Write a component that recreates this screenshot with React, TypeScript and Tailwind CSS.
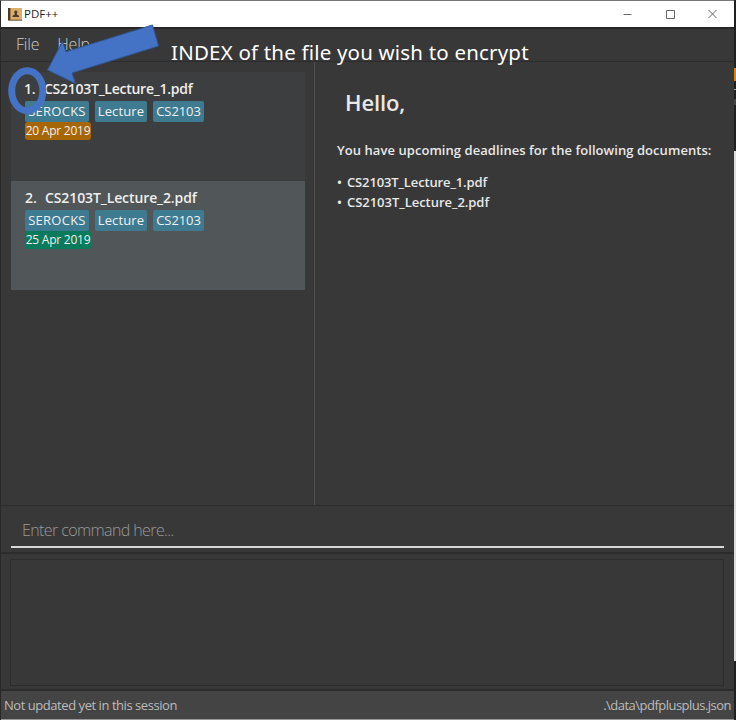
type Doc = { n: string; name: string; date: string; titleSpacing: string; card: string; dateBg: string };

const docs: Doc[] = [
  { n: "1.", name: "CS2103T_Lecture_1.pdf", date: "20 Apr 2019", titleSpacing: "tracking-[-0.26px]", card: "bg-[#3c3e3f]", dateBg: "bg-[#a86707]" },
  { n: "2.", name: "CS2103T_Lecture_2.pdf", date: "25 Apr 2019", titleSpacing: "tracking-[-0.1px] pl-px", card: "bg-[#515658]", dateBg: "bg-[#077b5b]" },
];

const tags = [
  { label: "SEROCKS", size: "w-16 tracking-[0.25px]" },
  { label: "Lecture", size: "w-[52px] tracking-[0.15px]" },
  { label: "CS2103", size: "w-[51px] tracking-[-0.1px]" },
];

function AddressBookIcon() {
  return (
    <svg width="14" height="13" viewBox="0 0 14 13">
      <rect width="14" height="12" rx="0.5" fill="#d9ae6c" />
      <rect width="2" height="12" fill="#4a392e" />
      <path d="M2.5 0v12" stroke="#a7814c" />
      <circle cx="7.8" cy="4" r="1.6" fill="#4b3928" />
      <path d="M4.6 9V7.8l2.2-1.2V5h2v1.6L11 7.8V9z" fill="#4b3928" />
      <path d="M0 12.2h14" stroke="#67492e" />
    </svg>
  );
}

function DocumentCard({ doc }: { doc: Doc }) {
  return (
    <article className={`h-[109px] pt-[7px] pl-[13px] ${doc.card}`}>
      <div className={`flex h-5 items-center text-[14px] font-semibold leading-5 text-[#eee] ${doc.titleSpacing}`}>
        <span className="w-5">{doc.n}</span>
        <span>{doc.name}</span>
      </div>
      <div className="mt-[2px] flex gap-[6px] pl-px">
        {tags.map((tag) => (
          <span key={tag.label} className={`flex h-[21px] items-center justify-center rounded-[2px] bg-[#3e7b91] text-[13px] font-medium text-[#f0f0f0] ${tag.size}`}>
            {tag.label}
          </span>
        ))}
      </div>
      <div className={`ml-px flex h-[18px] w-[66px] items-center justify-center rounded-[3px] text-[12px] tracking-[-0.25px] text-[#eee] ${doc.dateBg}`}>{doc.date}</div>
    </article>
  );
}

export default function App() {
  return (
    <div className="relative flex h-[720px] w-[736px] overflow-hidden bg-[#383838] font-['Open_Sans','Noto_Sans',sans-serif] whitespace-nowrap">
      <div className="flex w-[734px] flex-col border-t border-l border-t-[#777] border-l-[#292929]">
        <header className="flex h-[26px] shrink-0 items-center bg-white pl-[7px] text-[11.5px] text-[#222]">
          <AddressBookIcon />
          <span className="ml-[2px]">PDF++</span>
          <svg className="ml-auto" width="112" height="26" viewBox="0 0 112 26" fill="none" stroke="#666" strokeWidth="1">
            <path d="M1.5 13.5h8M44.5 9.5h8v8h-8zM86.5 9l8 8M94.5 9l-8 8" />
          </svg>
        </header>
        <nav className="flex h-[35px] shrink-0 gap-[18px] border-t-2 border-b border-t-[#272727] border-b-[#2c2c2c] pt-[2px] pl-[15px] text-[16px] font-light leading-[26px] tracking-[-0.2px] text-[#ccc]">
          <span>File</span>
          <span>Help</span>
        </nav>
        <main className="flex h-[443px] shrink-0">
          <section className="w-[314px] border-r border-[#505050] pt-[10px] pr-[9px] pl-[10px]">
            {docs.map((doc) => <DocumentCard key={doc.n} doc={doc} />)}
          </section>
          <section className="pt-[24px] pl-[22px] text-[#e8e8e8]">
            <h1 className="pl-[8px] text-[22px] font-semibold leading-8 tracking-[-0.15px]">Hello,</h1>
            <p className="mt-[22px] text-[13px] font-semibold leading-5 tracking-[0.06px]">You have upcoming deadlines for the following documents:</p>
            <div className="mt-[13px] text-[13px] font-semibold leading-[19.5px] tracking-[-0.14px]">
              {docs.map((doc) => <div key={doc.n} className="flex"><span className="w-[10px]">•</span><span className={doc.n === "2." ? "tracking-[-0.04px]" : ""}>{doc.name}</span></div>)}
            </div>
          </section>
        </main>
        <section className="h-[49px] shrink-0 border-t border-b-2 border-t-[#2d2d2d] border-b-[#2c2c2c] px-[10px]">
          <div className="h-[42px] border-b-2 border-[#d7d7d7] pt-[11px] pl-[11px] text-[16px] font-light leading-[26px] tracking-[-0.6px] text-[#9a9a9a]">Enter command here...</div>
        </section>
        <section className="h-[137px] shrink-0 border-b-2 border-[#2c2c2c] pt-[5px] pr-[10px] pl-[9px]">
          <div className="h-[127px] border border-[#2c2c2c]" />
        </section>
        <footer className="flex h-[28px] shrink-0 items-center justify-between bg-[#444] pt-px pr-[3px] pl-[3px] text-[13px] tracking-[-0.45px] text-[#bcbcbc]">
          <span>Not updated yet in this session</span>
          <span className="tracking-[-0.52px]">.\data\pdfplusplus.json</span>
        </footer>
        <div className="h-px shrink-0 bg-[#999]" />
      </div>
      <aside className="flex w-[2px] flex-col bg-[#202020]">
        <div className="mt-[68px] h-[13px] bg-[#d58511]" />
        <div className="mt-2 h-px bg-[#aaa]" />
        <div className="mt-[9px] h-[6px] bg-[#444]" />
        <div className="mt-[46px] h-[510px] bg-[#ddd]" />
      </aside>
      <svg className="absolute top-0 left-0" width="170" height="125" viewBox="0 0 170 125">
        <path d="M47.5 70L62.5 41.5l3.5 10.3L152.5 25l6 21L72 73l3.5 10.5z" fill="#4472c4" stroke="#315792" strokeWidth="1" />
        <ellipse cx="27.3" cy="90.7" rx="15.6" ry="20" fill="none" stroke="#4472c4" strokeWidth="7" />
      </svg>
      <div className="absolute top-[37px] left-[171px] font-['Noto_Sans',sans-serif] text-[20.5px] leading-[30px] tracking-[0.19px] text-white">INDEX of the file you wish to encrypt</div>
    </div>
  );
}
